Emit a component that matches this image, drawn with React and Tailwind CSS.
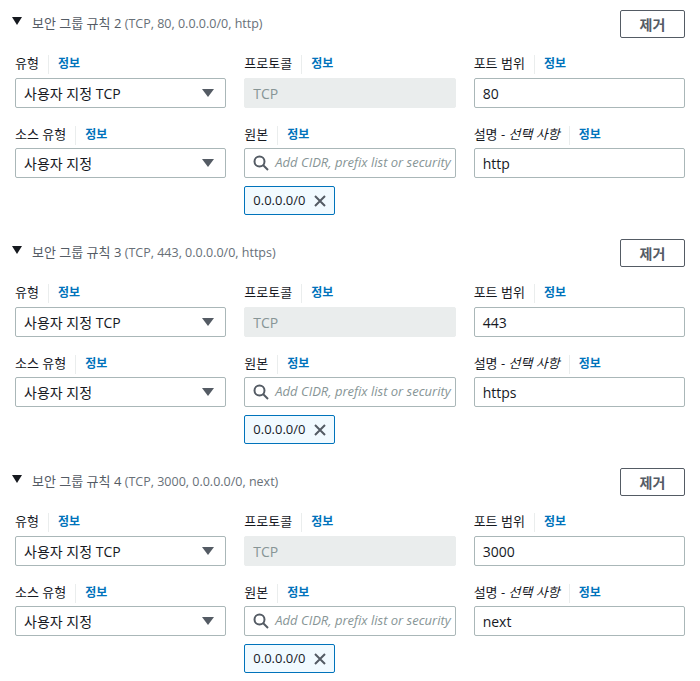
import { Fragment } from 'react'

const rules = [
    { n: 2, port: '80', desc: 'http' },
    { n: 3, port: '443', desc: 'https' },
    { n: 4, port: '3000', desc: 'next' },
]

function Label({ children }) {
    return (
        <div className="flex items-center h-5 text-[13px] text-[#16191f]">
            <span>{children}</span>
            <span className="mx-[9px] h-[19px] w-px bg-[#eaeded]"></span>
            <span className="text-[#0073bb] font-semibold text-[12px]">정보</span>
        </div>
    )
}

function Caret() {
    return (
        <svg width="12" height="8" viewBox="0 0 12 8" className="shrink-0">
            <path d="M0 0 L12 0 L6 8 Z" fill="#545b64" />
        </svg>
    )
}

function Select({ value }) {
    return (
        <div className="flex items-center justify-between h-[30px] border border-[#aab7b8] rounded-[2px] pl-2 pr-[11px] text-[14px] text-[#16191f] bg-white">
            <span>{value}</span>
            <Caret />
        </div>
    )
}

function Input({ value, disabled }) {
    return (
        <div className={`flex items-center h-[30px] rounded-[2px] px-[8px] text-[14px] ${disabled ? 'bg-[#eaeded] text-[#879596] border border-[#eaeded]' : 'bg-white text-[#16191f] border border-[#aab7b8]'}`}>
            {value}
        </div>
    )
}

function Search() {
    return (
        <div className="flex items-center h-[30px] border border-[#aab7b8] rounded-[2px] pl-[8px] bg-white overflow-hidden whitespace-nowrap">
            <svg width="16" height="16" viewBox="0 0 16 16" className="shrink-0" fill="none" stroke="#545b64" strokeWidth="2">
                <circle cx="6.5" cy="6.5" r="5" />
                <path d="M10 10 L15 15" />
            </svg>
            <span className="ml-[6px] italic text-[13px] text-[#879596]">Add CIDR, prefix list or security</span>
        </div>
    )
}

function Rule({ rule }) {
    return (
        <div className="pb-[24px]">
            <div className="flex items-center justify-between h-7">
                <div className="flex items-center pl-[12px]">
                    <svg width="10" height="8" viewBox="0 0 10 8" className="-mt-[6px]">
                        <path d="M0 0 L10 0 L5 8 Z" fill="#16191f" />
                    </svg>
                    <span className="ml-[10px] text-[13px] text-[#545b64]">
                        보안 그룹 규칙 {rule.n} <span className="text-[12.5px] text-[#687078]">(TCP, {rule.port}, 0.0.0.0/0, {rule.desc})</span>
                    </span>
                </div>
                <button className="h-7 w-[65px] mr-[15px] border border-[#545b64] rounded-[2px] text-[14px] font-semibold text-[#545b64] bg-white">제거</button>
            </div>
            <div className="grid grid-cols-3 gap-x-[18px] px-[15px] mt-[16px]">
                <Label>유형</Label>
                <Label>프로토콜</Label>
                <Label>포트 범위</Label>
                <div className="mt-1"><Select value="사용자 지정 TCP" /></div>
                <div className="mt-1"><Input value="TCP" disabled /></div>
                <div className="mt-1"><Input value={rule.port} /></div>
            </div>
            <div className="grid grid-cols-3 gap-x-[18px] px-[15px] mt-[17px]">
                <Label>소스 유형</Label>
                <Label>원본</Label>
                <Label>설명 - <span className="italic">선택 사항</span></Label>
                <div className="mt-[3px]"><Select value="사용자 지정" /></div>
                <div className="mt-[3px]">
                    <Search />
                    <div className="mt-[8px] inline-flex items-center h-[29px] border border-[#0073bb] bg-[#f1faff] rounded-[2px] pl-[8px] pr-[8px] text-[13px] text-[#16191f]">
                        0.0.0.0/0
                        <svg width="12" height="12" viewBox="0 0 12 12" className="ml-[8px]" stroke="#545b64" strokeWidth="2">
                            <path d="M1 1 L11 11 M11 1 L1 11" />
                        </svg>
                    </div>
                </div>
                <div className="mt-[3px]"><Input value={rule.desc} /></div>
            </div>
        </div>
    )
}

export default function App() {
    return (
        <div className="w-[700px] h-[681px] bg-white pt-[10px] overflow-hidden" style={{ fontFamily: '"Open Sans", "Noto Sans CJK KR", sans-serif' }}>
            {rules.map(r => (
                <Fragment key={r.n}>
                    <Rule rule={r} />
                </Fragment>
            ))}
        </div>
    )
}
